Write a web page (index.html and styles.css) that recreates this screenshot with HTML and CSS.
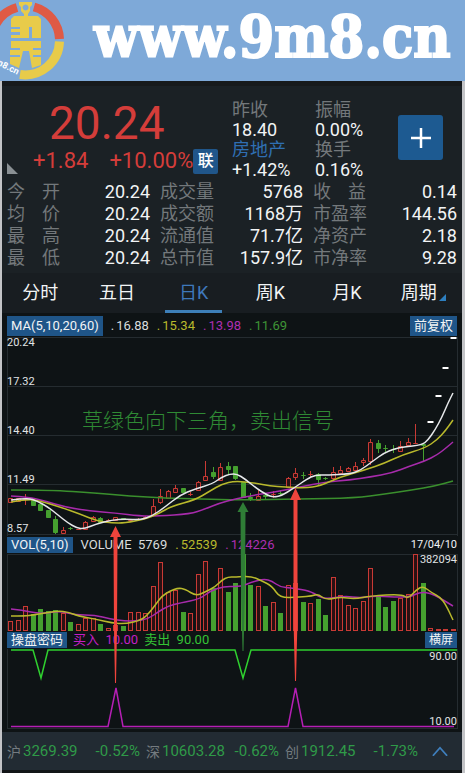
FILE: index.html
```
<!DOCTYPE html>
<html lang="zh-CN">
<head>
    <meta charset="UTF-8">
    <meta name="viewport" content="width=device-width, initial-scale=1">
    <title>日K 行情</title>
    <link rel="stylesheet" href="styles.css">
</head>
<body>
    <header class="banner">
        <svg class="logo" viewBox="0 0 66 81" aria-hidden="true">
            <g fill="none" stroke-width="9">
                <path d="M34 7A34.500 34.500 0 0 1 59.500 39" stroke="#df5a45"/>
                <path d="M17 7.500A34.500 34.500 0 0 0 -4 24" stroke="#df5a45"/>
                <path d="M59.500 41.500A34.500 34.500 0 0 1 20 74.500" stroke="#e8cb4a"/>
            </g>
            <path fill="#e8cb4a" fill-rule="evenodd" d="M19 2H32V5L30 7V11L28 14V16H38L41 19V38H32V27H29V38H11V35H20V32H11V29H20V27H11V19L14 16H24V14L21 11V7L19 5ZM25.500 4.500A3 3 0 1 0 25.600 4.500Z"/>
            <path fill="#e8cb4a" d="M11 41H41V48H33V50H41V55H33V57H41V65L32 68L29 51H23L19 68L10 64V57H20V55H10V50H20V48H11Z"/>
            <text class="logo-text" x="-10" y="61" transform="rotate(27 -10 61)">9m8.cn</text>
        </svg>
        <h1>www.9m8.cn</h1>
    </header>

    <main class="phone">
        <section class="quote">
            <div class="summary">
                <div class="price">
                    <div class="last">20.24</div>
                    <div class="change">
                        <span>+1.84</span>
                        <span>+10.00%</span>
                        <button class="link-badge">联</button>
                    </div>
                </div>
                <dl class="facts">
                    <dt>昨收</dt>
                    <dd>18.40</dd>
                    <dt><a href="#sector">房地产</a></dt>
                    <dd>+1.42%</dd>
                </dl>
                <dl class="facts">
                    <dt>振幅</dt>
                    <dd>0.00%</dd>
                    <dt>换手</dt>
                    <dd>0.16%</dd>
                </dl>
                <button class="add" aria-label="添加自选">
                    <svg viewBox="0 0 22 22"><path d="M11 1V21M1 11H21" stroke="#fff" stroke-width="2.500"/></svg>
                </button>
            </div>
            <table class="details">
                <colgroup>
                    <col class="col-label"><col class="col-value">
                    <col class="col-label"><col class="col-value">
                    <col class="col-label"><col>
                </colgroup>
                <tr>
                    <th>今<i></i>开</th><td>20.24</td>
                    <th>成交量</th><td>5768</td>
                    <th>收<i></i>益</th><td>0.14</td>
                </tr>
                <tr>
                    <th>均<i></i>价</th><td>20.24</td>
                    <th>成交额</th><td>1168万</td>
                    <th>市盈率</th><td>144.56</td>
                </tr>
                <tr>
                    <th>最<i></i>高</th><td>20.24</td>
                    <th>流通值</th><td>71.7亿</td>
                    <th>净资产</th><td>2.18</td>
                </tr>
                <tr>
                    <th>最<i></i>低</th><td>20.24</td>
                    <th>总市值</th><td>157.9亿</td>
                    <th>市净率</th><td>9.28</td>
                </tr>
            </table>
        </section>

        <nav class="tabs">
            <button>分时</button>
            <button>五日</button>
            <button class="active">日K</button>
            <button>周K</button>
            <button>月K</button>
            <button class="more">周期</button>
        </nav>

        <section class="charts">
            <div class="chart-head chart-head-ma">
                <button class="tag">MA(5,10,20,60)</button>
                <span class="dot white">16.88</span>
                <span class="dot yellow">15.34</span>
                <span class="dot purple">13.98</span>
                <span class="dot green">11.69</span>
                <button class="tag right">前复权</button>
            </div>
            <svg class="plot" viewBox="2 337 460 199">
                <path class="grid" d="M7.500 337V536M457.500 337V536M7 337.500H458M7 386.500H458M7 435.500H458M7 484.500H458M7 534.500H458"/>
                <g id="candles"></g>
                <g id="priceLines"></g>
                <text class="axis" x="7" y="346">20.24</text>
                <text class="axis" x="7" y="385">17.32</text>
                <text class="axis" x="7" y="434">14.40</text>
                <text class="axis" x="7" y="483">11.49</text>
                <text class="axis" x="7" y="532">8.57</text>
                <text class="note" x="82" y="428">草绿色向下三角，卖出信号</text>
            </svg>

            <div class="chart-head">
                <button class="tag">VOL(5,10)</button>
                <span class="white">VOLUME&nbsp; 5769</span>
                <span class="dot yellow">52539</span>
                <span class="dot purple">124226</span>
                <time class="date right">17/04/10</time>
            </div>
            <svg class="plot" viewBox="2 554 460 77">
                <path class="grid" d="M7.500 554V631M457.500 554V631M7 554.500H458"/>
                <g id="volumes"></g>
                <g id="volumeLines"></g>
                <text class="axis end" x="457" y="563">382094</text>
            </svg>

            <div class="chart-head chart-head-signal">
                <button class="tag">操盘密码</button>
                <span class="magenta">买入&nbsp; 10.00</span>
                <span class="lime">卖出&nbsp; 90.00</span>
                <button class="tag small right">横屏</button>
            </div>
            <svg class="plot" viewBox="2 649 460 83">
                <path class="grid" d="M7.500 649V728M457.500 649V728M7 728.500H458"/>
                <path class="line" stroke="#2fd02f" d="M11 650H33L41 678L48 650H235L243 678L251 650H457"/>
                <path class="line" stroke="#b51fb5" d="M11 726.500H108L116 688L123 726.500H288L295.500 688L303 726.500H454"/>
                <text class="axis end" x="457" y="660">90.00</text>
                <text class="axis end" x="457" y="725">10.00</text>
            </svg>

            <!-- buy / sell arrows, drawn across all three charts -->
            <svg class="arrows" viewBox="2 313 460 419" preserveAspectRatio="none" aria-hidden="true">
                <path fill="#f0443c" d="M115.500 526L121 537H117.500L117 630L116 683H115L114 630L113.500 537H110Z"/>
                <path fill="#f0443c" d="M295.500 488L301 500H297.500V620L296 681H295L293.500 620V500H290Z"/>
                <path fill="#2f7d36" d="M243 502L248.500 512H245.500L245 590L243.500 651H242.500L241 590L240.500 512H237.500Z"/>
            </svg>
        </section>

        <footer class="ticker">
            <div class="index"><b>沪</b><span>3269.39</span><span class="pct">-0.52%</span></div>
            <div class="index"><b>深</b><span>10603.28</span><span class="pct">-0.62%</span></div>
            <div class="index"><b>创</b><span>1912.45</span><span class="pct">-1.73%</span></div>
            <button class="expand" aria-label="展开">
                <svg viewBox="0 0 18 12"><path d="M1 11L9 2L17 11" fill="none" stroke="#3f7fbd" stroke-width="2"/></svg>
            </button>
        </footer>
    </main>

    <script src="chart.js"></script>
</body>
</html>
```
FILE: styles.css
```
* { box-sizing: border-box; }
body {
    margin: 0;
    background: #c3c4c7;
    color: #f2f4f5;
    font-family: Roboto, "Noto Sans CJK SC", sans-serif;
    font-size: 18px;
}
button {
    margin: 0;
    padding: 0;
    border: none;
    background: none;
    color: inherit;
    font: inherit;
    cursor: pointer;
}
svg { display: block; }

/* banner */
.banner {
    display: flex;
    align-items: center;
    height: 81px;
    background: #7ea9d8;
    overflow: hidden;
}
.logo {
    flex: none;
    width: 66px;
    height: 81px;
}
.logo-text {
    fill: #fff;
    font-size: 9px;
    font-weight: bold;
}
.banner h1 {
    flex: 1;
    margin: 0;
    padding: 0 0 8px 28px;
    color: #fff;
    font-family: "DejaVu Serif Condensed", "DejaVu Serif", serif;
    font-size: 57px;
    line-height: 70px;
    white-space: nowrap;
    -webkit-text-stroke: 2px #fff;
}

.phone {
    margin: 0 3px 0 2px;
    background: #1b2125;
    border-bottom: 3px solid #121517;
}

/* quote */
.quote {
    padding: 14px 5px 4px;
    border-top: 5px solid #171a1c;
}
.summary {
    position: relative;
    display: grid;
    grid-template-columns: 225px 83px 83px 1fr;
    height: 81px;
}
.summary::before {
    content: "";
    position: absolute;
    left: 0;
    bottom: 7px;
    border-bottom: 11px solid #8a9094;
    border-right: 11px solid transparent;
}
.last {
    padding: 0 0 2px 42px;
    color: #d43d3a;
    font-size: 46px;
    line-height: 46px;
}
.change {
    display: flex;
    align-items: center;
    padding-left: 26px;
    color: #d43d3a;
    font-size: 22px;
    line-height: 26px;
}
.change span + span { margin-left: 21px; }
.link-badge {
    flex: none;
    width: 25px;
    height: 25px;
    border-radius: 2px;
    background: #20568a;
    color: #fff;
    font-size: 16px;
    line-height: 24px;
    font-weight: 500;
}
.facts {
    margin: 0;
    line-height: 20px;
}
.facts dt { color: #73787b; }
.facts dd { margin: 0; }
.facts a {
    color: #2f6fb3;
    text-decoration: none;
}
.add {
    display: flex;
    align-items: center;
    justify-content: center;
    width: 45px;
    height: 45px;
    margin-top: 15px;
    border-radius: 3px;
    background: #1d5a91;
}
.add svg { width: 22px; }

.details {
    width: 100%;
    border-collapse: collapse;
    table-layout: fixed;
    line-height: 22px;
}
.details th, .details td {
    height: 22px;
    padding: 0;
    white-space: nowrap;
}
.details th {
    color: #73787b;
    font-weight: normal;
    text-align: left;
}
.details th i {
    display: inline-block;
    width: 17px;
}
.details td { text-align: right; }
.details td:nth-child(2), .details td:nth-child(4) { padding-right: 10px; }
.col-label { width: 14%; }
.col-value { width: 20%; }

/* tabs */
.tabs {
    display: grid;
    grid-template-columns: repeat(6, 1fr);
    height: 40px;
    background: #181d21;
}
.tabs button {
    position: relative;
    line-height: 38px;
}
.tabs .active { color: #3f78bb; }
.tabs .active::after {
    content: "";
    position: absolute;
    left: 10px;
    right: 10px;
    bottom: 0;
    height: 3px;
    background: #3d7fb8;
}
.tabs .more { padding-right: 10px; }
.tabs .more::after {
    content: "";
    position: absolute;
    right: 16px;
    bottom: 12px;
    border-bottom: 7px solid #2d7fc0;
    border-left: 7px solid transparent;
}

/* charts */
.charts {
    position: relative;
    background: #0e1315;
}
.chart-head {
    display: flex;
    align-items: center;
    height: 18px;
    padding: 0 5px;
    font-size: 13px;
    line-height: 16px;
    white-space: nowrap;
}
.chart-head-ma {
    height: 24px;
    padding-top: 2px;
    line-height: 20px;
}
.chart-head span { margin-left: 8px; }
.chart-head-signal span { margin-left: 6px; }
.chart-head .right { margin-left: auto; }
.tag {
    padding: 0 4px;
    background: #1f5588;
    color: #f2f4f5;
}
.tag.small { font-size: 12px; }
.dot::before {
    content: ".";
    padding-right: 2px;
}
.date { font-size: 11px; }
.white { color: #d9dcdd; }
.yellow { color: #b9b92c; }
.purple { color: #ad2fb0; }
.green { color: #3f9436; }
.magenta { color: #c41fc4; }
.lime { color: #35c235; }

.plot {
    width: 100%;
    height: auto;
}
.grid {
    fill: none;
    stroke: #252c30;
}
.axis {
    fill: #e1e4e5;
    font-size: 11px;
}
.end { text-anchor: end; }
.note {
    fill: #2f8a34;
    font-family: "Noto Sans CJK SC", sans-serif;
    font-size: 21px;
    font-weight: 300;
}
.line {
    fill: none;
    stroke-width: 1.500;
}
.up {
    fill: #2a1113;
    stroke: #c93a35;
}
.down {
    fill: #45a02f;
    stroke: #45a02f;
}
.flat { stroke: #fff; stroke-width: 2; }
.arrows {
    position: absolute;
    top: 0;
    left: 0;
    width: 100%;
    height: 100%;
    pointer-events: none;
}

/* ticker */
.ticker {
    display: flex;
    align-items: center;
    gap: 6px;
    height: 38px;
    padding: 0 14px 0 5px;
    background: #222b33;
    color: #2f9a48;
    font-size: 15px;
}
.index {
    display: flex;
    flex: 1;
    align-items: center;
    white-space: nowrap;
}
.index b {
    margin-right: 2px;
    color: #747b80;
    font-size: 14px;
    font-weight: normal;
}
.index .pct { margin-left: auto; }
.expand {
    flex: none;
    margin-left: 8px;
}
.expand svg { width: 16px; }
```
FILE: chart.js
```
const FIRST_X = 10.7;
const STEP = 7.5;

// direction, high, body top, body bottom, low
const candles = [
    ['up', 498, 498, 502, 502], ['up', 498, 498, 501, 501], ['up', 494, 498, 499, 505],
    ['down', 499, 500, 505, 505], ['down', 504, 504, 510, 510], ['down', 510, 510, 517, 518],
    ['down', 516, 519, 532, 534], ['up', 527, 530, 533, 533], ['down', 527, 528, 528, 530],
    ['up', 529, 529, 529, 530], ['up', 521, 522, 529, 530], ['up', 516, 517, 521, 521],
    ['down', 517, 518, 522, 522], ['up', 519, 520, 520, 521], ['up', 517, 517, 520, 520],
    ['down', 518, 518, 519, 519], ['up', 519, 520, 520, 521], ['up', 518, 519, 519, 520],
    ['up', 516, 517, 517, 518], ['up', 499, 506, 515, 516], ['up', 489, 496, 502, 504],
    ['up', 490, 491, 498, 498], ['up', 485, 488, 492, 493], ['down', 488, 488, 492, 493],
    ['up', 492, 494, 494, 496], ['up', 481, 482, 490, 490], ['up', 461, 476, 480, 481],
    ['down', 467, 472, 476, 479], ['up', 463, 467, 480, 480], ['down', 462, 466, 469, 474],
    ['down', 466, 466, 478, 480], ['down', 482, 482, 497, 497], ['down', 493, 497, 498, 501],
    ['up', 490, 496, 500, 501], ['down', 493, 495, 496, 499], ['up', 491, 494, 494, 498],
    ['down', 490, 493, 493, 495], ['up', 477, 478, 487, 487], ['up', 468, 473, 477, 480],
    ['down', 472, 475, 475, 479], ['up', 471, 474, 474, 478], ['down', 473, 474, 479, 485],
    ['down', 477, 478, 478, 480], ['up', 467, 472, 478, 482], ['up', 466, 470, 473, 474],
    ['up', 467, 468, 471, 472], ['up', 462, 466, 470, 471], ['up', 458, 460, 462, 466],
    ['up', 439, 442, 461, 465], ['down', 440, 443, 448, 453], ['down', 445, 448, 448, 453],
    ['down', 445, 449, 449, 453], ['up', 441, 446, 451, 452], ['up', 438, 442, 445, 445],
    ['up', 424, 443, 443, 444], ['down', 443, 444, 445, 462],
    ['flat', 422, 422, 422, 422], ['flat', 396, 396, 396, 396],
    ['flat', 368, 368, 368, 368], ['flat', 338, 338, 338, 338]
];

// top of each volume bar
const VOLUME_BASE = 630;
const volumes = [
    621, 620, 606, 614, 609, 611, 610, 613, 622, 624, 618, 618, 624, 628, 625,
    626, 612, 612, 613, 586, 562, 592, 590, 612, 613, 574, 561, 588, 568, 592,
    583, 554, 585, 586, 606, 602, 613, 585, 583, 602, 603, 599, 615, 577, 595,
    605, 608, 601, 568, 597, 607, 601, 598, 594, 554, 583, 628, 629, 629, 629
];

const priceLines = [
    ['#3a8f2d', '11,490 50,490 95,493 130,496 165,498 200,499 240,500 300,499 355,498 385,494 412,490 435,486 453,481'],
    ['#a72bab', '11,496 28,497 45,501 65,507 90,511 115,513 140,516 158,516 190,514 205,509 220,503 235,499 255,495 275,492 300,487 325,482 350,480 370,477 392,473 410,466 425,461 437,455 446,448 453,442'],
    ['#b9b92c', '11,502 28,499 40,501 60,507 80,514 97,521 112,523 125,523 145,519 158,514 172,506 195,500 210,491 222,484 235,481 255,483 270,486 285,487 305,488 320,486 340,477 365,470 385,463 402,455 425,448 437,440 446,430 453,420'],
    ['#e6e8ea', '11,500 28,498 37,501 48,507 58,515 68,523 77,528 84,529 96,524 112,520 125,519 140,520 152,516 165,507 180,495 195,489 212,484 222,477 230,474 237,474 245,479 256,488 267,495 273,497 281,496 294,488 307,479 315,475 328,475 350,474 361,470 373,461 384,453 394,449 403,447 422,445 428,440 435,430 442,417 448,403 453,393']
];

const volumeLines = [
    ['#a72bab', '11,609 22,610 40,614 60,611 75,615 95,615 110,619 125,621 135,621 148,619 158,612 168,606 180,603 200,599 210,591 225,586 240,587 252,582 264,579 272,581 280,587 292,588 310,591 318,596 326,599 345,596 360,598 373,596 395,597 410,597 420,592 430,593 440,598 448,603 453,606'],
    ['#b9b92c', '11,616 25,616 33,615 45,613 58,611 68,612 78,616 95,619 112,623 125,624 142,620 150,612 156,604 162,596 170,591 178,588 185,589 196,596 205,592 215,587 222,580 228,577 235,577 251,576 262,581 272,586 280,598 300,597 312,596 318,594 326,600 340,597 355,599 370,596 402,594 408,599 416,590 423,586 432,593 440,597 446,605 453,620']
];

function add(parentId, name, attrs) {
    const el = document.createElementNS('http://www.w3.org/2000/svg', name);
    for (const key in attrs) el.setAttribute(key, attrs[key]);
    document.getElementById(parentId).appendChild(el);
}

// smooth path through the points, using the midpoints as curve ends
function curve(text) {
    const pts = text.split(' ').map(p => p.split(',').map(Number));
    let d = `M${pts[0]}`;
    for (let i = 1; i < pts.length - 1; i++) {
        const mx = (pts[i][0] + pts[i + 1][0]) / 2;
        const my = (pts[i][1] + pts[i + 1][1]) / 2;
        d += `Q${pts[i]} ${mx},${my}`;
    }
    return d + `L${pts[pts.length - 1]}`;
}

candles.forEach(([dir, high, top, bottom, low], i) => {
    const x = Math.round(FIRST_X + i * STEP - 0.5) + 0.5;
    if (dir === 'flat') {
        add('candles', 'path', { class: dir, d: `M${x - 3} ${top}H${x + 3}` });
        return;
    }
    add('candles', 'path', { class: dir, d: `M${x} ${high}V${top}M${x} ${bottom}V${low}` });
    add('candles', 'path', { class: dir, d: `M${x - 2} ${top + 0.5}H${x + 2}V${bottom + 0.5}H${x - 2}Z` });
});

volumes.forEach((top, i) => {
    const x = Math.round(FIRST_X + i * STEP - 0.5) + 0.5;
    const dir = candles[i][0] === 'down' ? 'down' : 'up';
    add('volumes', 'rect', { class: dir, x: x - 2, y: top + 0.5, width: 4, height: VOLUME_BASE - top });
});

priceLines.forEach(([stroke, pts]) => add('priceLines', 'path', { class: 'line', stroke, d: curve(pts) }));
volumeLines.forEach(([stroke, pts]) => add('volumeLines', 'path', { class: 'line', stroke, d: curve(pts) }));
```
